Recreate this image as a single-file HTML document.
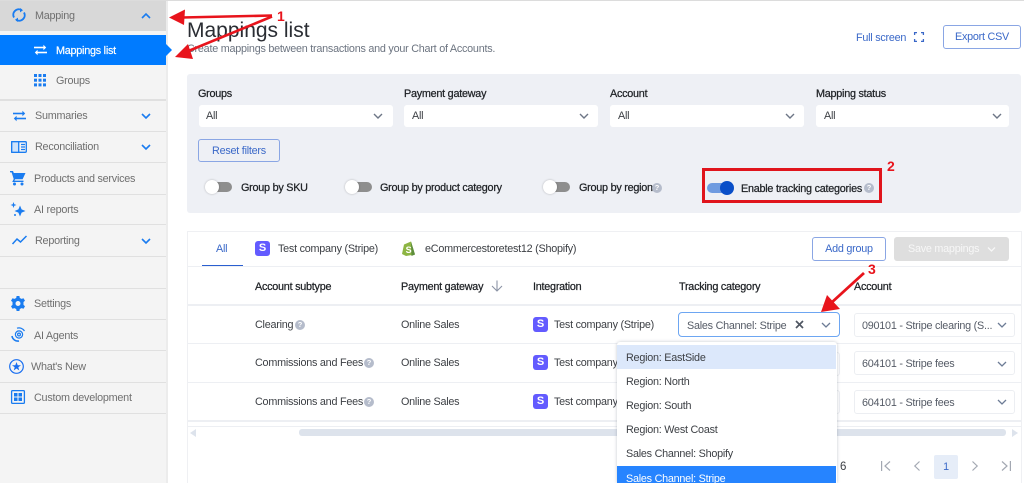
<!DOCTYPE html>
<html><head><meta charset="utf-8">
<style>
html,body{margin:0;padding:0;background:#fff}
#p{position:relative;width:1024px;height:483px;overflow:hidden;background:#fff;font-family:"Liberation Sans",sans-serif;font-size:10.8px;letter-spacing:-.24px;color:#3d4045}
#p div,#p span.t{position:absolute;white-space:nowrap}
.t{line-height:14px;margin-top:1px}
.sb{color:#6f6f6f}
.ln{left:0;width:166px;height:1px;background:#e0e0e0}
.lab{font-weight:400;color:#1f2226;-webkit-text-stroke:.25px #1f2226}
.sel{background:#fff;border-radius:3px}
.bd{border:1px solid #eceef2;box-sizing:border-box}
.btn{border:1px solid #8aa6e4;border-radius:3px;box-sizing:border-box;color:#3a68c8;text-align:center;background:#fff}
.tr{width:26px;height:10px;background:#8e8e8e;border-radius:5px}
.kn{width:14px;height:14px;border-radius:50%;background:#fff;box-shadow:0 0 2px rgba(0,0,0,.25)}
.q{width:10px;height:10px;border-radius:50%;background:#b5bccb;color:#fff;font-size:7.5px;line-height:10px;text-align:center;font-weight:bold;letter-spacing:0}
.s{width:15px;height:15px;border-radius:3px;background:#635bff;color:#fff;font-size:11px;line-height:15px;text-align:center;font-weight:bold;letter-spacing:0}
.hl{height:1px;background:#edeff3}
.n{font-family:"Liberation Sans",sans-serif;font-weight:bold;font-size:14px;color:#e8141c;letter-spacing:0}
svg{position:absolute;overflow:visible}
</style></head><body><div id="p">

<!-- sidebar -->
<div style="left:0;top:0;width:166px;height:483px;background:#f4f4f4"></div>
<div style="left:166px;top:0;width:2px;height:483px;background:#ececec"></div>
<div style="left:0;top:0;width:1024px;height:1px;background:#dcdcdc"></div>
<div style="left:0;top:1px;width:166px;height:30px;background:#d8d8d8"></div>
<div style="left:0;top:35px;width:166px;height:30px;background:#007bff"></div>
<svg style="left:166px;top:44px" width="6" height="12"><path d="M0 0L6 6L0 12Z" fill="#007bff"/></svg>
<div class="ln" style="top:99px;height:2px"></div>
<div class="ln" style="top:131px"></div>
<div class="ln" style="top:162px"></div>
<div class="ln" style="top:194px"></div>
<div class="ln" style="top:224px"></div>
<div class="ln" style="top:256px"></div>
<div class="ln" style="top:288px"></div>
<div class="ln" style="top:319px"></div>
<div class="ln" style="top:350px"></div>
<div class="ln" style="top:382px"></div>
<div class="ln" style="top:413px"></div>

<span class="t sb" style="left:35px;top:8px">Mapping</span>
<span class="t" style="left:56px;top:43px;color:#fff;-webkit-text-stroke:.2px #fff">Mappings list</span>
<span class="t sb" style="left:56px;top:73px">Groups</span>
<span class="t sb" style="left:35px;top:108px">Summaries</span>
<span class="t sb" style="left:35px;top:139px">Reconciliation</span>
<span class="t sb" style="left:34px;top:171px">Products and services</span>
<span class="t sb" style="left:34px;top:202px">AI reports</span>
<span class="t sb" style="left:35px;top:233px">Reporting</span>
<span class="t sb" style="left:34px;top:296px">Settings</span>
<span class="t sb" style="left:34px;top:328px">AI Agents</span>
<span class="t sb" style="left:31px;top:359px">What's New</span>
<span class="t sb" style="left:34px;top:390px">Custom development</span>

<!-- sidebar icons -->
<svg style="left:12px;top:8px" width="14" height="14" fill="none" stroke="#1a7cf0" stroke-width="1.9"><path d="M2 9.5A5.5 5.5 0 0 1 9.5 2"/><path d="M12 4.5A5.5 5.5 0 0 1 4.5 12"/><path d="M8 0L11 2.2L8 4.4Z" fill="#1a7cf0" stroke="none"/><path d="M6 9.6L3 11.8L6 14Z" fill="#1a7cf0" stroke="none"/></svg>
<svg style="left:34px;top:45px" width="13" height="10" fill="none" stroke="#fff" stroke-width="1.6"><path d="M3 7.5H13"/><path d="M3.6 4.8L.8 7.5L3.6 10.2Z" fill="#fff" stroke="none"/><path d="M0 2.5H10"/><path d="M9.4 -.2L12.2 2.5L9.4 5.2Z" fill="#fff" stroke="none"/></svg>
<svg style="left:34px;top:74px" width="12" height="13" fill="#1a7cf0"><rect x="0" y="0" width="3" height="3"/><rect x="4.5" y="0" width="3" height="3"/><rect x="9" y="0" width="3" height="3"/><rect x="0" y="4.7" width="3" height="3"/><rect x="4.5" y="4.7" width="3" height="3"/><rect x="9" y="4.7" width="3" height="3"/><rect x="0" y="9.4" width="3" height="3"/><rect x="4.5" y="9.4" width="3" height="3"/><rect x="9" y="9.4" width="3" height="3"/></svg>
<svg style="left:13px;top:111px" width="13" height="10" fill="none" stroke="#1a7cf0" stroke-width="1.6"><path d="M3 7.5H13"/><path d="M3.6 4.8L.8 7.5L3.6 10.2Z" fill="#1a7cf0" stroke="none"/><path d="M0 2.5H10"/><path d="M9.4 -.2L12.2 2.5L9.4 5.2Z" fill="#1a7cf0" stroke="none"/></svg>
<svg style="left:11px;top:141px" width="16" height="12" fill="none" stroke="#1a7cf0" stroke-width="1.3"><rect x=".7" y=".7" width="14.6" height="10.6" rx="1"/><rect x=".7" y=".7" width="7" height="10.6" fill="#cfe3fb"/><path d="M10 3.5H14M10 6H14M10 8.5H14"/></svg>
<svg style="left:9px;top:170px" width="18" height="16" fill="#1a7cf0"><path d="M1 1H4L4.8 3H16.5L13.6 9.2H6.2L5.4 10.6H14.5V12H3.2L4.7 9L2.6 2.4H1Z"/><circle cx="5.5" cy="14" r="1.5"/><circle cx="13" cy="14" r="1.5"/></svg>
<svg style="left:10px;top:202px" width="17" height="15" fill="#1a7cf0"><path d="M10 3.5L11.6 7.4L15.5 9L11.6 10.6L10 14.5L8.4 10.6L4.5 9L8.4 7.4Z"/><path d="M3.5 0L4.3 2.2L6.5 3L4.3 3.8L3.5 6L2.7 3.8L.5 3L2.7 2.2Z"/><circle cx="5" cy="13" r="1"/></svg>
<svg style="left:12px;top:235px" width="15" height="10" fill="none" stroke="#1a7cf0" stroke-width="1.5"><path d="M.5 9L5 4L8.5 7L14.5 1"/></svg>
<svg style="left:11px;top:296px" width="14" height="15" viewBox="0 0 14 15"><path fill="#1a7cf0" fill-rule="evenodd" d="M5.6 0H8.4L8.8 2L10.6 2.9L12.5 2.2L14 4.7L12.5 6V8.9L14 10.3L12.5 12.8L10.6 12.1L8.8 13L8.4 15H5.6L5.2 13L3.4 12.1L1.5 12.8L0 10.3L1.5 8.9V6L0 4.7L1.5 2.2L3.4 2.9L5.2 2ZM7 5A2.5 2.5 0 1 0 7 10A2.5 2.5 0 1 0 7 5Z"/></svg>
<svg style="left:11px;top:327px" width="14" height="15" fill="none" stroke="#1a7cf0" stroke-width="1.2"><circle cx="8" cy="7.5" r="1.4"/><circle cx="8" cy="7.5" r="3.6"/><path d="M6 1.2A6.5 6.5 0 0 1 13.5 4"/><path d="M1 9A6 6 0 0 0 8 14" stroke-width="1.6"/></svg>
<svg style="left:9px;top:359px" width="15" height="15" fill="none" stroke="#1a6ff0" stroke-width="1.2"><circle cx="7.5" cy="7.5" r="6.8"/><path fill="#1a6ff0" stroke="none" d="M7.5 3L8.7 6.2H12L9.3 8.2L10.3 11.5L7.5 9.5L4.7 11.5L5.7 8.2L3 6.2H6.3Z"/></svg>
<svg style="left:11px;top:390px" width="15" height="14" fill="#1a7cf0"><rect x=".6" y=".6" width="12.8" height="12.8" rx="1" fill="none" stroke="#1a7cf0" stroke-width="1.3"/><rect x="3" y="3" width="3.5" height="3.5"/><rect x="7.5" y="3" width="3.5" height="3.5"/><rect x="3" y="7.5" width="3.5" height="3.5"/><rect x="7.5" y="7.5" width="3.5" height="3.5"/></svg>

<!-- sidebar chevrons -->
<svg style="left:141px;top:13px" width="10" height="6" fill="none" stroke="#1a7cf0" stroke-width="1.6"><path d="M1 5L5 1L9 5"/></svg>
<svg style="left:141px;top:113px" width="10" height="6" fill="none" stroke="#1a7cf0" stroke-width="1.6"><path d="M1 1L5 5L9 1"/></svg>
<svg style="left:141px;top:144px" width="10" height="6" fill="none" stroke="#1a7cf0" stroke-width="1.6"><path d="M1 1L5 5L9 1"/></svg>
<svg style="left:141px;top:238px" width="10" height="6" fill="none" stroke="#1a7cf0" stroke-width="1.6"><path d="M1 1L5 5L9 1"/></svg>

<!-- header -->
<span class="t" style="left:187px;top:18px;font-size:21px;line-height:24px;letter-spacing:0;color:#2a2d33">Mappings list</span>
<span class="t" style="left:187px;top:41px;color:#6c7480">Create mappings between transactions and your Chart of Accounts.</span>
<span class="t" style="left:856px;top:30px;color:#3a68c8">Full screen</span>
<svg style="left:914px;top:32px" width="10" height="10" fill="none" stroke="#3a68c8" stroke-width="1.3"><path d="M.6 3V.6H3M7 .6H9.4V3M9.4 7V9.4H7M3 9.4H.6V7"/></svg>
<div class="btn" style="left:943px;top:25px;width:78px;height:24px;line-height:23px">Export CSV</div>

<!-- filters -->
<div style="left:187px;top:74px;width:834px;height:139px;background:#eef0f5;border-radius:3px"></div>
<span class="t lab" style="left:198px;top:86px">Groups</span>
<span class="t lab" style="left:404px;top:86px">Payment gateway</span>
<span class="t lab" style="left:610px;top:86px">Account</span>
<span class="t lab" style="left:816px;top:86px">Mapping status</span>
<div class="sel" style="left:199px;top:105px;width:194px;height:22px"></div>
<div class="sel" style="left:404px;top:105px;width:194px;height:22px"></div>
<div class="sel" style="left:610px;top:105px;width:194px;height:22px"></div>
<div class="sel" style="left:816px;top:105px;width:193px;height:22px"></div>
<span class="t" style="left:206px;top:108px">All</span>
<span class="t" style="left:412px;top:108px">All</span>
<span class="t" style="left:618px;top:108px">All</span>
<span class="t" style="left:824px;top:108px">All</span>
<svg style="left:373px;top:113px" width="10" height="6" fill="none" stroke="#6d7686" stroke-width="1.4"><path d="M1 1L5 5L9 1"/></svg>
<svg style="left:579px;top:113px" width="10" height="6" fill="none" stroke="#6d7686" stroke-width="1.4"><path d="M1 1L5 5L9 1"/></svg>
<svg style="left:785px;top:113px" width="10" height="6" fill="none" stroke="#6d7686" stroke-width="1.4"><path d="M1 1L5 5L9 1"/></svg>
<svg style="left:992px;top:113px" width="10" height="6" fill="none" stroke="#6d7686" stroke-width="1.4"><path d="M1 1L5 5L9 1"/></svg>
<div class="btn" style="left:198px;top:139px;width:82px;height:23px;line-height:22px;background:#eef0f5">Reset filters</div>

<!-- toggles -->
<div class="tr" style="left:206px;top:182px"></div><div class="kn" style="left:205px;top:180px"></div>
<span class="t lab" style="left:241px;top:180px">Group by SKU</span>
<div class="tr" style="left:346px;top:182px"></div><div class="kn" style="left:345px;top:180px"></div>
<span class="t lab" style="left:380px;top:180px">Group by product category</span>
<div class="tr" style="left:544px;top:182px"></div><div class="kn" style="left:543px;top:180px"></div>
<span class="t lab" style="left:579px;top:180px">Group by region</span>
<div class="q" style="left:652px;top:183px">?</div>
<div class="tr" style="left:707px;top:183px;background:#6f9be0"></div><div class="kn" style="left:720px;top:181px;background:#0a4fc8;box-shadow:none"></div>
<span class="t lab" style="left:741px;top:181px">Enable tracking categories</span>
<div class="q" style="left:864px;top:183px">?</div>
<div style="left:702px;top:168px;width:180px;height:35px;box-sizing:border-box;border:3px solid #e0141c"></div>

<!-- table card -->
<div style="left:187px;top:231px;width:835px;height:252px;border:1px solid #eff0f3;border-bottom:0;box-sizing:border-box"></div>
<span class="t" style="left:216px;top:241px;color:#3a68c8">All</span>
<div style="left:202px;top:265px;width:41px;height:2px;background:#2a5fd0"></div>
<div class="s" style="left:255px;top:241px">S</div>
<span class="t" style="left:278px;top:241px">Test company (Stripe)</span>
<svg style="left:402px;top:241px" width="13" height="15"><path d="M2 3.5L9 .5L13 13.5L4 15L0 13Z" fill="#8db543"/><path d="M9 .5L13 13.5L9.5 15Z" fill="#5e8e3e"/><text x="3.6" y="12" font-size="9" font-weight="bold" fill="#fff" font-family="Liberation Sans">S</text></svg>
<span class="t" style="left:425px;top:241px">eCommercestoretest12 (Shopify)</span>
<div class="btn" style="left:812px;top:237px;width:74px;height:24px;line-height:23px">Add group</div>
<div style="left:894px;top:237px;width:115px;height:24px;background:#dedede;border-radius:3px;color:#f7f7f7;line-height:24px;text-indent:14px">Save mappings</div>
<svg style="left:987px;top:247px" width="9" height="5" fill="none" stroke="#f7f7f7" stroke-width="1.3"><path d="M1 .5L4.5 4L8 .5"/></svg>

<div class="hl" style="left:188px;top:266px;width:833px"></div>
<span class="t lab" style="left:255px;top:279px">Account subtype</span>
<span class="t lab" style="left:401px;top:279px">Payment gateway</span>
<svg style="left:491px;top:280px" width="12" height="12" fill="none" stroke="#8b93a5" stroke-width="1.1"><path d="M6 .5V11M1 6L6 11L11 6"/></svg>
<span class="t lab" style="left:533px;top:279px">Integration</span>
<span class="t lab" style="left:679px;top:279px">Tracking category</span>
<span class="t lab" style="left:854px;top:279px">Account</span>

<div class="hl" style="left:188px;top:304px;width:833px;height:2px"></div>
<div class="hl" style="left:188px;top:343px;width:833px"></div>
<div class="hl" style="left:188px;top:382px;width:833px"></div>
<div class="hl" style="left:188px;top:420px;width:833px;height:2px"></div>
<div class="hl" style="left:188px;top:426px;width:833px"></div>

<span class="t" style="left:255px;top:317px">Clearing</span><div class="q" style="left:295px;top:320px">?</div>
<span class="t" style="left:255px;top:355px">Commissions and Fees</span><div class="q" style="left:364px;top:358px">?</div>
<span class="t" style="left:255px;top:394px">Commissions and Fees</span><div class="q" style="left:364px;top:397px">?</div>
<span class="t" style="left:401px;top:317px">Online Sales</span>
<span class="t" style="left:401px;top:355px">Online Sales</span>
<span class="t" style="left:401px;top:394px">Online Sales</span>
<div class="s" style="left:533px;top:317px">S</div><span class="t" style="left:554px;top:317px">Test company (Stripe)</span>
<div class="s" style="left:533px;top:355px">S</div><span class="t" style="left:554px;top:355px">Test company (Stripe)</span>
<div class="s" style="left:533px;top:394px">S</div><span class="t" style="left:554px;top:394px">Test company (Stripe)</span>

<div style="left:678px;top:312px;width:162px;height:25px;border:1px solid #6da6f2;border-radius:4px;box-sizing:border-box;background:#fff"></div>
<span class="t" style="left:687px;top:318px;color:#555b66">Sales Channel: Stripe</span>
<svg style="left:795px;top:320px" width="9" height="9" fill="none" stroke="#4f5662" stroke-width="1.7"><path d="M1 1L8 8M8 1L1 8"/></svg>
<svg style="left:821px;top:322px" width="10" height="6" fill="none" stroke="#6d7c96" stroke-width="1.3"><path d="M1 1L5 5L9 1"/></svg>

<div class="bd" style="left:800px;top:352px;width:40px;height:24px;border-radius:3px"></div>
<div class="bd" style="left:800px;top:390px;width:40px;height:24px;border-radius:3px"></div>
<div class="bd" style="left:854px;top:313px;width:161px;height:24px;border-radius:3px"></div>
<div class="bd" style="left:854px;top:351px;width:161px;height:24px;border-radius:3px"></div>
<div class="bd" style="left:854px;top:390px;width:161px;height:24px;border-radius:3px"></div>
<span class="t" style="left:862px;top:318px;color:#555b66">090101 - Stripe clearing (S...</span>
<span class="t" style="left:862px;top:356px;color:#555b66">604101 - Stripe fees</span>
<span class="t" style="left:862px;top:395px;color:#555b66">604101 - Stripe fees</span>
<svg style="left:997px;top:322px" width="10" height="6" fill="none" stroke="#6d7c96" stroke-width="1.3"><path d="M1 1L5 5L9 1"/></svg>
<svg style="left:997px;top:361px" width="10" height="6" fill="none" stroke="#6d7c96" stroke-width="1.3"><path d="M1 1L5 5L9 1"/></svg>
<svg style="left:997px;top:399px" width="10" height="6" fill="none" stroke="#6d7c96" stroke-width="1.3"><path d="M1 1L5 5L9 1"/></svg>

<!-- scrollbar -->
<div style="left:299px;top:429px;width:707px;height:7px;background:#dde3ec;border-radius:3px"></div>
<svg style="left:190px;top:429px" width="7" height="8"><path d="M6 0V8L0 4Z" fill="#dde3ec"/></svg>
<svg style="left:1012px;top:429px" width="7" height="8"><path d="M0 0V8L6 4Z" fill="#dde3ec"/></svg>

<!-- pagination -->
<span class="t" style="left:840px;top:459px;font-size:11.5px">6</span>
<svg style="left:881px;top:461px" width="10" height="10" fill="none" stroke="#a3a8b2" stroke-width="1.2"><path d="M.6 0V10M9 .5L4 5L9 9.5"/></svg>
<svg style="left:914px;top:461px" width="6" height="10" fill="none" stroke="#a3a8b2" stroke-width="1.2"><path d="M5.5 .5L.8 5L5.5 9.5"/></svg>
<div style="left:934px;top:455px;width:24px;height:24px;background:#e6edf8;border-radius:2px;color:#3a68c8;text-align:center;line-height:24px">1</div>
<svg style="left:972px;top:461px" width="6" height="10" fill="none" stroke="#a3a8b2" stroke-width="1.2"><path d="M.5 .5L5.2 5L.5 9.5"/></svg>
<svg style="left:1001px;top:461px" width="10" height="10" fill="none" stroke="#a3a8b2" stroke-width="1.2"><path d="M1 .5L6 5L1 9.5M9.4 0V10"/></svg>

<!-- dropdown -->
<div style="left:617px;top:342px;width:220px;height:141px;background:#fff;border-radius:3px 3px 0 0;box-shadow:0 0 3px rgba(60,70,90,.3)"></div>
<div style="left:617px;top:345px;width:219px;height:24px;background:#dce8fb"></div>
<span class="t" style="left:626px;top:350px">Region: EastSide</span>
<span class="t" style="left:626px;top:374px">Region: North</span>
<span class="t" style="left:626px;top:398px">Region: South</span>
<span class="t" style="left:626px;top:422px">Region: West Coast</span>
<span class="t" style="left:626px;top:446px">Sales Channel: Shopify</span>
<div style="left:617px;top:466px;width:219px;height:17px;background:#2684ff"></div>
<span class="t" style="left:626px;top:471px;color:#fff">Sales Channel: Stripe</span>

<!-- annotations -->
<svg style="left:0;top:0" width="1024" height="483">
<path d="M272 15.5L182 17.5" stroke="#e8141c" stroke-width="2.6" fill="none"/>
<path d="M169 17.5L185 9.5L184 25Z" fill="#e8141c"/>
<path d="M272 16.5L186 52" stroke="#e8141c" stroke-width="2.6" fill="none"/>
<path d="M175 57L188 44L193 59Z" fill="#e8141c"/>
<path d="M864 273L830 304" stroke="#e8141c" stroke-width="2.8" fill="none"/>
<path d="M821 312L827 295L840 309Z" fill="#e8141c"/>
</svg>
<span class="t n" style="left:277px;top:8px">1</span>
<span class="t n" style="left:887px;top:158px">2</span>
<span class="t n" style="left:868px;top:261px">3</span>

</div></body></html>
